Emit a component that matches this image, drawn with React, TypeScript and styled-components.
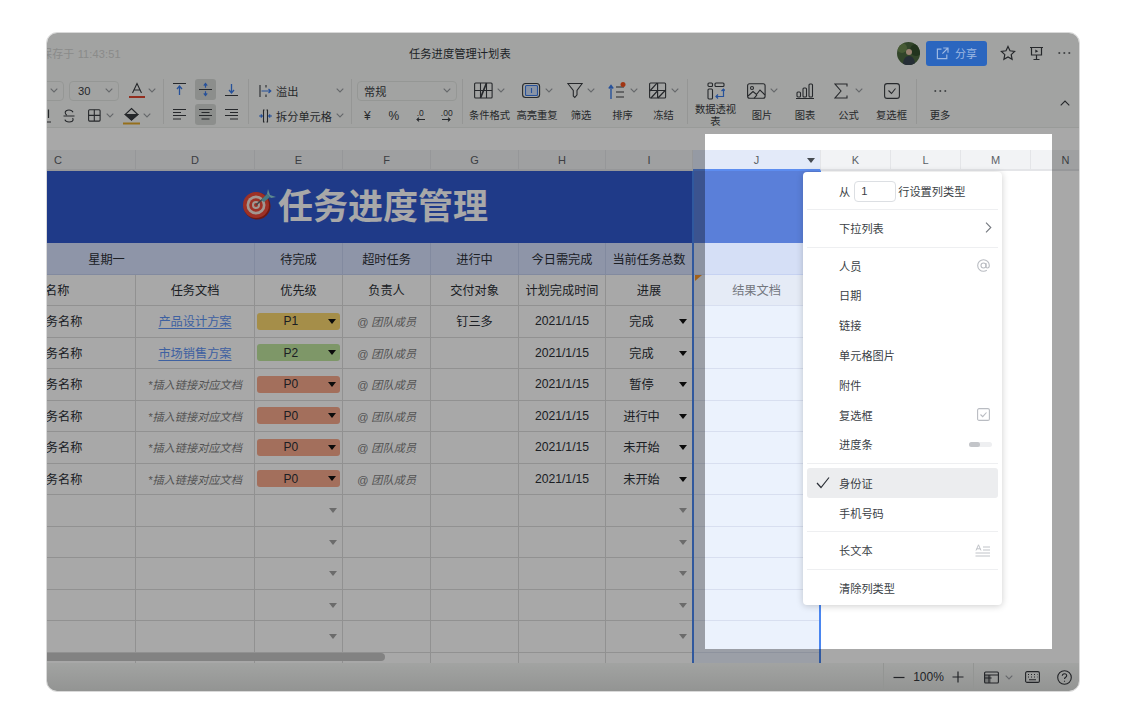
import { ReactNode } from 'react';
import styled, { createGlobalStyle } from 'styled-components';

const GlobalStyle = createGlobalStyle`
    html, body {
        margin: 0;
        padding: 0;
        background: #fff;
    }
    body {
        font-family: 'Liberation Sans', 'Noto Sans CJK SC', sans-serif;
        color: #2b2f36;
    }
`;

const Page = styled.div`
    width: 1125px;
    height: 726px;
    padding: 32px 0 0 46px;
    box-sizing: border-box;
`;

const Window = styled.div`
    position: relative;
    width: 1034px;
    height: 660px;
    box-sizing: border-box;
    display: flex;
    flex-direction: column;
    overflow: hidden;
    border: 1px solid #d9d9d9;
    border-radius: 11px;
    background: #fff;
`;

/* ---------- title bar ---------- */
const TitleBar = styled.div`
    height: 42px;
    flex: none;
    box-sizing: border-box;
    padding: 0 1px 2px 0;
    display: flex;
    align-items: center;
    background: #f6f8f6;
`;

const Saved = styled.div`
    width: 362px;
    flex: none;
    margin-left: -6px;
    margin-right: 6px;
    font-size: 11px;
    color: #d2d3d2;
    letter-spacing: 0.15px;
    white-space: nowrap;
`;

const DocName = styled.div`
    font-size: 11.3px;
    color: #30343a;
    white-space: nowrap;
`;

const TitleActions = styled.div`
    margin-left: auto;
    display: flex;
    align-items: center;
`;

const Avatar = styled.svg`
    width: 23px;
    height: 23px;
    border-radius: 50%;
    margin-right: 6px;
`;

const ShareButton = styled.div`
    position: relative;
    z-index: 3;
    width: 61px;
    height: 25px;
    margin-right: 7px;
    display: flex;
    align-items: center;
    justify-content: center;
    gap: 6px;
    border-radius: 3px;
    background: #2b66bf;
    color: #9db8e2;
    font-size: 11px;
`;

const HeadIcon = styled.div`
    width: 28px;
    height: 24px;
    display: flex;
    align-items: center;
    justify-content: center;
    color: #3a3d42;
`;

/* ---------- toolbar ---------- */
const Toolbar = styled.div`
    height: 53px;
    flex: none;
    box-sizing: border-box;
    display: flex;
    padding-top: 3px;
    border-bottom: 1px solid #e9ebe9;
    background: #f6f8f6;
    color: #3a3d42;
`;

const ToolGroup = styled.div<{ $w: number; $pl?: number }>`
    width: ${(p) => p.$w}px;
    padding-left: ${(p) => p.$pl || 0}px;
    box-sizing: border-box;
    flex: none;
    display: grid;
    grid-template-rows: 25px 25px;
    overflow: hidden;
`;

const ToolRow = styled.div<{ $between?: boolean }>`
    display: flex;
    align-items: center;
    justify-content: ${(p) => (p.$between ? 'space-between' : 'flex-start')};
    min-width: 0;
    font-size: 11.2px;
    white-space: nowrap;
`;

const Sep = styled.div<{ $ml?: number; $mr?: number }>`
    flex: none;
    width: 1px;
    height: 45px;
    margin: 1px ${(p) => p.$mr || 0}px 0 ${(p) => p.$ml || 0}px;
    background: #e2e4e2;
`;

const SelectBox = styled.div<{ $w: number; $ml?: number; $pl?: number }>`
    flex: none;
    width: ${(p) => p.$w}px;
    height: 20px;
    margin-left: ${(p) => p.$ml || 0}px;
    padding: 0 5px 0 ${(p) => p.$pl || 8}px;
    box-sizing: border-box;
    display: flex;
    align-items: center;
    justify-content: space-between;
    border: 1px solid #e3e5e3;
    border-radius: 4px;
    font-size: 11.2px;
`;

const Ic = styled.svg<{ $ml?: number; $mr?: number }>`
    flex: none;
    display: block;
    margin-left: ${(p) => p.$ml || 0}px;
    margin-right: ${(p) => p.$mr || 0}px;
    fill: none;
    stroke: currentColor;
    stroke-width: 1.1;
`;

const AlignGrid = styled.div`
    display: grid;
    grid-template-columns: repeat(3, 21px);
    grid-template-rows: 21px 21px;
    gap: 4px 5px;
    margin-top: 1px;
    grid-row: 1 / 3;
`;

const AlignCell = styled.div<{ $on?: boolean }>`
    display: flex;
    align-items: center;
    justify-content: center;
    border-radius: 3px;
    background: ${(p) => (p.$on ? '#d5d8d5' : 'transparent')};
`;

const MiniGrid = styled.div`
    display: grid;
    grid-template-columns: repeat(4, 26.5px);
    margin-left: -3px;
    font-size: 11.5px;
`;

const MiniCell = styled.div<{ $big?: boolean }>`
    display: flex;
    flex-direction: column;
    align-items: center;
    justify-content: center;
    line-height: 8px;
    font-size: ${(p) => (p.$big ? 12 : 8.5)}px;
`;

const InlineLabel = styled.span`
    display: flex;
    align-items: center;
`;

const BigButton = styled.div<{ $w: number }>`
    flex: none;
    width: ${(p) => p.$w}px;
    display: grid;
    grid-template-rows: 25px 25px;
    justify-items: center;
    align-items: center;
`;

const BigIcon = styled.div`
    display: flex;
    align-items: center;
    gap: 4px;
`;

const BigLabel = styled.div`
    font-size: 10.3px;
    line-height: 11.5px;
    text-align: center;
    white-space: nowrap;
`;

const Collapse = styled.div`
    margin-left: auto;
    margin-right: 9px;
    display: flex;
    align-items: center;
    height: 50px;
`;

const FormulaBar = styled.div`
    height: 22px;
    flex: none;
    background: #fff;
`;

/* ---------- sheet ---------- */
const Sheet = styled.div`
    position: relative;
    flex: 1;
    min-height: 0;
    overflow: hidden;
`;

const Row = styled.div<{ $h: number }>`
    height: ${(p) => p.$h}px;
    display: grid;
    grid-template-columns: 155px 119px 88px 88px 88px 87px 87px 128px 70px 70px 70px 70px;
    margin-left: -66px;
`;

const ColHead = styled.div<{ $sel?: boolean }>`
    position: relative;
    display: flex;
    align-items: center;
    justify-content: center;
    box-sizing: border-box;
    font-size: 11px;
    color: #5b5f66;
    background: ${(p) => (p.$sel ? '#e3eaf9' : '#f2f3f5')};
    border-right: 1px solid #e4e5e8;
    border-bottom: 2px solid ${(p) => (p.$sel ? '#5d8df0' : '#e4e5e8')};
`;

const HeadArrow = styled.span`
    position: absolute;
    right: 5px;
    top: 8px;
    width: 0;
    height: 0;
    border: 4.5px solid transparent;
    border-top: 5px solid #454a52;
    border-bottom: 0;
`;

const Banner = styled.div`
    grid-column: 1 / span 7;
    display: flex;
    align-items: center;
    justify-content: center;
    gap: 1px;
    padding-left: 56px;
    padding-bottom: 7px;
    background: #2f58cf;
    color: #fff;
    font-size: 35px;
    font-weight: 700;
`;

const BannerSelected = styled.div`
    background: #5a7fd9;
`;

const BandCell = styled.div<{ $span?: number; $sel?: boolean; $pr?: number }>`
    grid-column: span ${(p) => p.$span || 1};
    box-sizing: border-box;
    display: flex;
    align-items: center;
    justify-content: center;
    padding-right: ${(p) => p.$pr || 0}px;
    font-size: 12.2px;
    background: ${(p) => (p.$sel ? '#d5dff6' : '#d8e2ff')};
    border-right: 1px solid #c6d2f2;
    border-bottom: 1px solid #c6d2f2;
    color: #2b2f36;
`;

const Cell = styled.div<{ $sel?: boolean; $pr?: number; $result?: boolean }>`
    position: relative;
    box-sizing: border-box;
    min-width: 0;
    display: flex;
    align-items: center;
    justify-content: center;
    padding-right: ${(p) => p.$pr || 0}px;
    font-size: 12.2px;
    white-space: nowrap;
    background: ${(p) => (p.$result ? '#e5ebf6' : p.$sel ? '#ebf2fd' : '#fff')};
    border-right: 1px solid ${(p) => (p.$sel ? '#d8dff0' : '#dcdcdc')};
    border-bottom: 1px solid ${(p) => (p.$sel ? '#d8dff0' : '#dcdcdc')};
    color: ${(p) => (p.$result ? '#74787f' : '#2b2f36')};
`;

const DocLink = styled.span`
    color: #5e93f5;
    text-decoration: underline;
    text-underline-offset: 2px;
`;

const Hint = styled.span`
    color: #7f7f7f;
    font-style: italic;
    font-size: 11.2px;
`;

const Chip = styled.div<{ $c: string }>`
    width: 83px;
    height: 17px;
    box-sizing: border-box;
    margin-right: 1px;
    padding: 0 4px 0 27px;
    display: flex;
    align-items: center;
    justify-content: space-between;
    border-radius: 3px;
    background: ${(p) => p.$c};
    font-size: 12px;
    color: #2b2f36;
`;

const Arrow = styled.span<{ $muted?: boolean }>`
    width: 0;
    height: 0;
    border: 4px solid transparent;
    border-top: 5px solid ${(p) => (p.$muted ? '#a3a3a3' : '#111')};
    border-bottom: 0;
`;

const CellArrow = styled(Arrow)`
    position: absolute;
    right: 5px;
    top: 13px;
`;

const Corner = styled.span`
    position: absolute;
    left: 2px;
    top: 0;
    width: 0;
    height: 0;
    border-top: 6px solid #f5932a;
    border-right: 7px solid transparent;
`;

const Selection = styled.div`
    position: absolute;
    left: 645px;
    top: 21px;
    bottom: 0;
    width: 129px;
    box-sizing: border-box;
    border-left: 2px solid #4a86f0;
    border-right: 2px solid #4a86f0;
    pointer-events: none;
`;

const ScrollThumb = styled.div`
    position: absolute;
    left: 0;
    bottom: 2px;
    width: 338px;
    height: 8px;
    border-radius: 0 4px 4px 0;
    background: #c6c6c6;
`;

/* ---------- status bar ---------- */
const StatusBar = styled.div`
    height: 28px;
    flex: none;
    display: flex;
    justify-content: flex-end;
    align-items: stretch;
    background: linear-gradient(#f6f8f6, #dfe1df);
    color: #34373c;
`;

const ZoomGroup = styled.div`
    width: 90px;
    box-sizing: border-box;
    display: flex;
    align-items: center;
    justify-content: center;
    gap: 8px;
    border-left: 1px solid #e0e2e0;
    font-size: 12px;
`;

const ViewGroup = styled.div`
    width: 106px;
    box-sizing: border-box;
    padding-left: 10px;
    display: flex;
    align-items: center;
    border-left: 1px solid #e0e2e0;
`;

/* ---------- spotlight and menu ---------- */
const Spotlight = styled.div`
    position: absolute;
    left: 658px;
    top: 101px;
    width: 347px;
    height: 515px;
    box-shadow: 0 0 0 1600px rgba(0, 0, 0, 0.34);
    pointer-events: none;
    z-index: 2;
`;

const Menu = styled.div`
    position: absolute;
    left: 756px;
    top: 139px;
    width: 199px;
    box-sizing: border-box;
    padding: 4px 4px 2px;
    background: #fff;
    border-radius: 4px;
    box-shadow: 0 1px 7px rgba(0, 0, 0, 0.2);
    z-index: 4;
    font-size: 11.2px;
    color: #3b3f46;
`;

const MenuHead = styled.div`
    height: 30px;
    display: flex;
    align-items: center;
    padding-left: 32px;
`;

const RowInput = styled.div`
    width: 42px;
    height: 21px;
    box-sizing: border-box;
    margin: 0 2px 0 4px;
    padding-left: 6px;
    display: flex;
    align-items: center;
    border: 1px solid #dcdfe3;
    border-radius: 4px;
`;

const MenuItem = styled.div<{ $active?: boolean }>`
    position: relative;
    height: 29.8px;
    display: flex;
    align-items: center;
    justify-content: space-between;
    padding: 0 6px 0 32px;
    border-radius: 3px;
    background: ${(p) => (p.$active ? '#ecedef' : 'transparent')};
`;

const MenuCheck = styled.span`
    position: absolute;
    left: 9px;
    top: 8px;
    color: #2b2f36;
`;

const MenuLine = styled.div<{ $mt: number; $mb: number }>`
    height: 1px;
    margin: ${(p) => p.$mt}px 0 ${(p) => p.$mb}px;
    background: #eeeff1;
`;

const Muted = styled.span`
    display: flex;
    margin-right: 2px;
    color: #b9bcc2;
`;

const ProgressTrack = styled.div`
    width: 23px;
    height: 5px;
    border-radius: 3px;
    background: #eeeff1;
`;

const ProgressFill = styled.div`
    width: 11px;
    height: 5px;
    border-radius: 3px;
    background: #c3c5c9;
`;

const ChevronIcon = styled(Ic)`
    color: #9a9da2;
`;

const MenuChevron = styled(Ic)`
    color: #74787f;
`;

/* ---------- icons ---------- */
const BLUE = '#3b7bea';

const Chevron = ({ ml = 0, mr = 0 }: { ml?: number; mr?: number }) => (
    <ChevronIcon width="8" height="5" viewBox="0 0 8 5" $ml={ml} $mr={mr}>
        <path d="M.7.7 4 4 7.3.7" />
    </ChevronIcon>
);

const Glyph = ({ w = 16, h = 16, ml, mr, children }: { w?: number; h?: number; ml?: number; mr?: number; children: ReactNode }) => (
    <Ic width={w} height={h} viewBox={`0 0 ${w} ${h}`} $ml={ml} $mr={mr}>
        {children}
    </Ic>
);

const alignIcon = (mode: 'top' | 'mid' | 'bottom') => (
    <Glyph w={15} h={15}>
        {mode === 'top' && (
            <>
                <path d="M1 1.5h13" />
                <path d="M7.5 13V4.5M5 7l2.5-3L10 7" stroke={BLUE} strokeWidth="1.3" />
            </>
        )}
        {mode === 'mid' && (
            <>
                <path d="M1 7.5h13" />
                <path d="M7.5 5.8V1M5.8 3.6 7.5 1.4l1.7 2.2M7.5 9.2V14M5.8 11.4l1.7 2.2 1.7-2.2" stroke={BLUE} strokeWidth="1.2" />
            </>
        )}
        {mode === 'bottom' && (
            <>
                <path d="M1 13.5h13" />
                <path d="M7.5 2v8.5M5 8l2.5 3L10 8" stroke={BLUE} strokeWidth="1.3" />
            </>
        )}
    </Glyph>
);

const linesIcon = (mode: 'left' | 'center' | 'right') => {
    const x = (len: number) => (mode === 'left' ? 1 : mode === 'right' ? 14 - len : 7.5 - len / 2);
    return (
        <Glyph w={15} h={13}>
            <path d={`M${x(13)} 1.5h13M${x(8)} 4.5h8M${x(13)} 7.5h13M${x(8)} 11h8`} />
        </Glyph>
    );
};

const TableSlash = () => (
    <Glyph w={19} h={17}>
        <rect x=".6" y="1" width="17.5" height="15" rx="1" />
        <path d="M6.5 1v15M12.5 1v15M.6 8.5h17.5" />
        <path d="M6.5 16 12.5 1" strokeWidth="1.7" />
    </Glyph>
);

const FreezeIcon = () => (
    <Glyph w={18} h={17}>
        <rect x=".6" y="1" width="16" height="15" rx="1" />
        <path d="M8.6 1v15M.6 8.5h16M.8 9 8 1.2M9 16l7.6-8M2 16l6.4-7" strokeWidth="1.2" />
    </Glyph>
);

function App() {
    const people = <Hint>@ 团队成员</Hint>;
    const fill = <Hint>*插入链接对应文档</Hint>;
    const rows = [
        { doc: <DocLink>产品设计方案</DocLink>, pri: 'P1', target: '钉三多', state: '完成' },
        { doc: <DocLink>市场销售方案</DocLink>, pri: 'P2', target: '', state: '完成' },
        { doc: fill, pri: 'P0', target: '', state: '暂停' },
        { doc: fill, pri: 'P0', target: '', state: '进行中' },
        { doc: fill, pri: 'P0', target: '', state: '未开始' },
        { doc: fill, pri: 'P0', target: '', state: '未开始' },
    ];
    const chipColor: Record<string, string> = { P1: '#fbd870', P2: '#bfe59f', P0: '#f8a98c' };

    return (
        <>
            <GlobalStyle />
            <Page>
                <Window>
                    <TitleBar>
                        <Saved>保存于 11:43:51</Saved>
                        <DocName>任务进度管理计划表</DocName>
                        <TitleActions>
                            <Avatar viewBox="0 0 23 23">
                                <rect width="23" height="23" fill="#4c6a40" />
                                <circle cx="5" cy="6" r="5" fill="#6c8a50" />
                                <circle cx="19" cy="8" r="6" fill="#34502e" />
                                <circle cx="12" cy="10" r="3" fill="#e9c5ac" />
                                <path d="M6 23c0-6 2.500-9 6-9s6 3 6 9z" fill="#3a4652" />
                            </Avatar>
                            <ShareButton>
                                <Ic width="13" height="13" viewBox="0 0 13 13">
                                    <path d="M5.5 2.2H1.4v9.4h9.4V7.5M7.2 1h4.8v4.8M12 1 6.4 6.6" strokeWidth="1.2" />
                                </Ic>
                                分享
                            </ShareButton>
                            <HeadIcon>
                                <Glyph w={16} h={16}>
                                    <path d="m8 1.5 2 4.3 4.6.6-3.4 3.2.9 4.7L8 12l-4.1 2.3.9-4.7L1.4 6.4 6 5.8z" strokeWidth="1.2" />
                                </Glyph>
                            </HeadIcon>
                            <HeadIcon>
                                <Glyph w={15} h={15}>
                                    <path d="M1 1.5h13M2.5 1.5v7.5h10V1.5M7.5 9v4M4.5 13.5h6" strokeWidth="1.2" />
                                    <path d="m6.3 3.6 3 1.6-3 1.6z" fill="currentColor" stroke="none" />
                                </Glyph>
                            </HeadIcon>
                            <HeadIcon>
                                <Glyph w={14} h={4}>
                                    <path d="M2 2h.6M7 2h.6M12 2h.6" strokeWidth="1.5" strokeLinecap="round" />
                                </Glyph>
                            </HeadIcon>
                        </TitleActions>
                    </TitleBar>

                    <Toolbar>
                        <ToolGroup $w={116}>
                            <ToolRow>
                                <SelectBox $w={34} $ml={-17}>
                                    <span />
                                    <Chevron />
                                </SelectBox>
                                <SelectBox $w={50} $ml={5}>
                                    <span>30</span>
                                    <Chevron />
                                </SelectBox>
                                <Glyph w={16} h={17} ml={10}>
                                    <path d="M3.5 11 8 1.5l4.5 9.5M5 8h6" />
                                    <path d="M0 15h16" stroke="#e0462f" strokeWidth="2.2" />
                                </Glyph>
                                <Chevron ml={3} />
                            </ToolRow>
                            <ToolRow>
                                <Glyph w={6} h={16} ml={-2}>
                                    <path d="M3.5 1.5v8.5M0 14h6" strokeWidth="1.2" />
                                </Glyph>
                                <Glyph w={12} h={14} ml={12}>
                                    <path d="M10 3.2C9.4 1.7 8 1 6 1 3.7 1 2.2 2 2.2 3.6c0 1 .4 1.9 1.6 2.4M.5 7h11M9.6 9c.4.6.5 1 .5 1.6 0 1.5-1.6 2.4-4 2.4-2.2 0-3.7-.8-4.2-2.4" />
                                </Glyph>
                                <Glyph w={13} h={13} ml={13}>
                                    <rect x=".6" y=".8" width="11.5" height="11.3" rx="1" />
                                    <path d="M6.3.8v11.3M.6 6.4h11.5" />
                                </Glyph>
                                <Chevron ml={5} />
                                <Glyph w={17} h={18} ml={9}>
                                    <path d="m8.5 1.5 6.3 6-6.3 5.5L2.2 7.5z" />
                                    <path d="M2.4 7.5h12.4l-6.3 5.5z" fill="currentColor" />
                                    <path d="M0 16.5h17" stroke="#e3a92a" strokeWidth="2.2" />
                                </Glyph>
                                <Chevron ml={3} />
                            </ToolRow>
                        </ToolGroup>
                        <Sep />
                        <ToolGroup $w={84} $pl={5}>
                            <AlignGrid>
                                <AlignCell>{alignIcon('top')}</AlignCell>
                                <AlignCell $on>{alignIcon('mid')}</AlignCell>
                                <AlignCell>{alignIcon('bottom')}</AlignCell>
                                <AlignCell>{linesIcon('left')}</AlignCell>
                                <AlignCell $on>{linesIcon('center')}</AlignCell>
                                <AlignCell>{linesIcon('right')}</AlignCell>
                            </AlignGrid>
                        </ToolGroup>
                        <Sep />
                        <ToolGroup $w={102} $pl={10}>
                            <ToolRow $between>
                                <InlineLabel>
                                    <Glyph w={13} h={14} mr={4}>
                                        <path d="M1 1v12M7 1v2.5M7 10.5V13" />
                                        <path d="M2.5 7h9M9.5 5l2.3 2-2.3 2" stroke={BLUE} strokeWidth="1.2" />
                                    </Glyph>
                                    溢出
                                </InlineLabel>
                                <Chevron mr={7} />
                            </ToolRow>
                            <ToolRow $between>
                                <InlineLabel>
                                    <Glyph w={13} h={14} mr={4}>
                                        <path d="M5.5 1h-1v12h1M7.5 1h1v12h-1" />
                                        <path d="M0 7h3M1.8 5.5 3.3 7 1.8 8.5M13 7h-3M11.2 5.5 9.7 7l1.5 1.5" stroke={BLUE} strokeWidth="1.2" />
                                    </Glyph>
                                    拆分单元格
                                </InlineLabel>
                                <Chevron mr={7} />
                            </ToolRow>
                        </ToolGroup>
                        <Sep />
                        <ToolGroup $w={110} $pl={5}>
                            <ToolRow>
                                <SelectBox $w={100} $pl={6}>
                                    <span>常规</span>
                                    <Chevron />
                                </SelectBox>
                            </ToolRow>
                            <ToolRow>
                                <MiniGrid>
                                    <MiniCell $big>¥</MiniCell>
                                    <MiniCell $big>%</MiniCell>
                                    <MiniCell>
                                        .0
                                        <Glyph w={11} h={5}>
                                            <path d="M10 2.5H2M4 .7 2 2.5l2 1.8" />
                                        </Glyph>
                                    </MiniCell>
                                    <MiniCell>
                                        .00
                                        <Glyph w={11} h={5}>
                                            <path d="M1 2.5h8M7 .7l2 1.8-2 1.8" />
                                        </Glyph>
                                    </MiniCell>
                                </MiniGrid>
                            </ToolRow>
                        </ToolGroup>
                        <Sep $mr={3} />

                        <BigButton $w={47}>
                            <BigIcon>
                                <TableSlash />
                                <Chevron />
                            </BigIcon>
                            <BigLabel>条件格式</BigLabel>
                        </BigButton>
                        <BigButton $w={48}>
                            <BigIcon>
                                <Glyph w={19} h={17}>
                                    <rect x=".6" y="1.5" width="17" height="14" rx="3" />
                                    <rect x="3.5" y="3.5" width="12" height="10" rx="1" stroke={BLUE} fill="#cfe0fb" />
                                    <path d="M9.5 6v5" stroke={BLUE} />
                                </Glyph>
                                <Chevron />
                            </BigIcon>
                            <BigLabel>高亮重复</BigLabel>
                        </BigButton>
                        <BigButton $w={40}>
                            <BigIcon>
                                <Glyph w={16} h={17}>
                                    <path d="M.8 1.5h14.4L10 8.5v4.3l-2.2 2.7L6.3 14V8.5z" />
                                </Glyph>
                                <Chevron />
                            </BigIcon>
                            <BigLabel>筛选</BigLabel>
                        </BigButton>
                        <BigButton $w={43}>
                            <BigIcon>
                                <Glyph w={18} h={18}>
                                    <path d="M3 17V4M.8 6.5 3 3.5l2.2 3" stroke={BLUE} strokeWidth="1.4" />
                                    <path d="M8 5h8M8 10h8M8 15h8" />
                                    <circle cx="15" cy="2.5" r="2.5" fill="#f4511e" stroke="none" />
                                </Glyph>
                                <Chevron />
                            </BigIcon>
                            <BigLabel>排序</BigLabel>
                        </BigButton>
                        <BigButton $w={39}>
                            <BigIcon>
                                <FreezeIcon />
                                <Chevron />
                            </BigIcon>
                            <BigLabel>冻结</BigLabel>
                        </BigButton>
                        <Sep $ml={4} $mr={3} />

                        <BigButton $w={49}>
                            <BigIcon>
                                <Glyph w={18} h={18}>
                                    <rect x="1" y="1" width="4.5" height="3.5" rx="1" />
                                    <rect x="8" y="1" width="9" height="3.5" rx="1" />
                                    <rect x="1" y="7" width="4.5" height="10" rx="1" />
                                    <path d="M16.5 7v7.5H9M11 12.5 9 14.5l2 2M14.5 9l2-2 2 2" stroke={BLUE} strokeWidth="1.2" />
                                </Glyph>
                            </BigIcon>
                            <BigLabel>
                                数据透视
                                <br />表
                            </BigLabel>
                        </BigButton>
                        <BigButton $w={44}>
                            <BigIcon>
                                <Glyph w={19} h={16}>
                                    <rect x=".6" y=".8" width="17.5" height="14.5" rx="2" />
                                    <circle cx="5" cy="5" r="1.5" />
                                    <path d="m1 13 5-4.5 3.5 3L13 7l5 5M7 15.3l3-3.5" />
                                </Glyph>
                                <Chevron />
                            </BigIcon>
                            <BigLabel>图片</BigLabel>
                        </BigButton>
                        <BigButton $w={42}>
                            <Glyph w={18} h={16}>
                                <rect x="1" y="9" width="3.5" height="5" rx="1" />
                                <rect x="7" y="5" width="3.5" height="9" rx="1" />
                                <rect x="13" y="1" width="3.5" height="13" rx="1" />
                                <path d="M0 15.5h18" />
                            </Glyph>
                            <BigLabel>图表</BigLabel>
                        </BigButton>
                        <BigButton $w={45}>
                            <BigIcon>
                                <Glyph w={14} h={16}>
                                    <path d="M13 3.5V1H1l6 7-6 7h12v-2.500" />
                                </Glyph>
                                <Chevron ml={3} />
                            </BigIcon>
                            <BigLabel>公式</BigLabel>
                        </BigButton>
                        <BigButton $w={41}>
                            <Glyph w={16} h={16}>
                                <rect x=".6" y=".6" width="14.8" height="14.8" rx="2.5" />
                                <path d="m4.5 7.5 3 3 4-5" />
                            </Glyph>
                            <BigLabel>复选框</BigLabel>
                        </BigButton>
                        <Sep $ml={4} $mr={3} />
                        <BigButton $w={40}>
                            <Glyph w={14} h={4}>
                                <path d="M2 2h.6M7 2h.6M12 2h.6" strokeWidth="1.4" strokeLinecap="round" />
                            </Glyph>
                            <BigLabel>更多</BigLabel>
                        </BigButton>
                        <Collapse>
                            <Glyph w={10} h={6}>
                                <path d="M.7 5.3 5 1l4.3 4.3" />
                            </Glyph>
                        </Collapse>
                    </Toolbar>

                    <FormulaBar />

                    <Sheet>
                        <Row $h={21}>
                            {'C D E F G H I J K L M N'.split(' ').map((c) => (
                                <ColHead key={c} $sel={c === 'J'}>
                                    {c}
                                    {c === 'J' && <HeadArrow />}
                                </ColHead>
                            ))}
                        </Row>
                        <Row $h={72}>
                            <Banner>
                                <svg width="35" height="32" viewBox="0 0 35 32">
                                    <circle cx="15" cy="18" r="13.5" fill="#a8261c" />
                                    <circle cx="14" cy="17" r="13" fill="#ee4b3a" />
                                    <circle cx="14" cy="17" r="9.5" fill="#f6e6dc" />
                                    <circle cx="14" cy="17" r="6.8" fill="#ee4b3a" />
                                    <circle cx="14" cy="17" r="4" fill="#f6e6dc" />
                                    <circle cx="14" cy="17" r="2" fill="#ee4b3a" />
                                    <path d="M14 17 23 9" stroke="#5a6b70" strokeWidth="1.5" />
                                    <path d="m19 12 6-6 3 3-6 5z" fill="#6bb8c4" />
                                    <path d="m26 1 2 6 6 2-5 1-4-4z" fill="#8fd0d8" />
                                </svg>
                                任务进度管理
                            </Banner>
                            <BannerSelected />
                        </Row>
                        <Row $h={32}>
                            <BandCell $span={2} $pr={22}>
                                星期一
                            </BandCell>
                            <BandCell>待完成</BandCell>
                            <BandCell>超时任务</BandCell>
                            <BandCell>进行中</BandCell>
                            <BandCell>今日需完成</BandCell>
                            <BandCell>当前任务总数</BandCell>
                            <BandCell $sel />
                        </Row>
                        <Row $h={31}>
                            <Cell $pr={26}>任务名称</Cell>
                            <Cell>任务文档</Cell>
                            <Cell>优先级</Cell>
                            <Cell>负责人</Cell>
                            <Cell>交付对象</Cell>
                            <Cell>计划完成时间</Cell>
                            <Cell>进展</Cell>
                            <Cell $sel $result>
                                <Corner />
                                结果文档
                            </Cell>
                        </Row>
                        {rows.map((r, i) => (
                            <Row $h={31.5} key={i}>
                                <Cell>任务名称</Cell>
                                <Cell>{r.doc}</Cell>
                                <Cell>
                                    <Chip $c={chipColor[r.pri]}>
                                        {r.pri}
                                        <Arrow />
                                    </Chip>
                                </Cell>
                                <Cell>{people}</Cell>
                                <Cell>{r.target}</Cell>
                                <Cell>2021/1/15</Cell>
                                <Cell $pr={15}>
                                    {r.state}
                                    <CellArrow />
                                </Cell>
                                <Cell $sel />
                            </Row>
                        ))}
                        {[0, 1, 2, 3, 4, 5].map((i) => (
                            <Row $h={31.5} key={i}>
                                <Cell />
                                <Cell />
                                <Cell>
                                    <CellArrow $muted />
                                </Cell>
                                <Cell />
                                <Cell />
                                <Cell />
                                <Cell>
                                    <CellArrow $muted />
                                </Cell>
                                <Cell $sel />
                            </Row>
                        ))}
                        <Selection />
                        <ScrollThumb />
                    </Sheet>

                    <StatusBar>
                        <ZoomGroup>
                            <Glyph w={12} h={3}>
                                <path d="M.5 1.5h11" strokeWidth="1.2" />
                            </Glyph>
                            100%
                            <Glyph w={12} h={12}>
                                <path d="M.5 6h11M6 .5v11" strokeWidth="1.2" />
                            </Glyph>
                        </ZoomGroup>
                        <ViewGroup>
                            <Glyph w={15} h={13}>
                                <rect x=".6" y="1" width="13.8" height="11" rx="1" />
                                <path d="M.6 4h13.8M.6 7h7M5 4v8" />
                                <rect x="1" y="4" width="6" height="8" fill="currentColor" stroke="none" opacity=".3" />
                            </Glyph>
                            <Chevron ml={6} />
                            <Glyph w={15} h={12} ml={12}>
                                <rect x=".6" y=".6" width="13.8" height="10.8" rx="1.5" />
                                <path d="M3 3.5h1M6 3.5h1M9 3.5h1M12 3.5h.5M3 6h1M6 6h1M9 6h1M12 6h.5M4 8.8h7" />
                            </Glyph>
                            <Glyph w={15} h={15} ml={17}>
                                <circle cx="7.5" cy="7.5" r="6.8" />
                                <path d="M5.3 5.8c0-1.3 1-2.1 2.2-2.1s2.2.8 2.2 2c0 1.5-2.2 1.7-2.2 3.3M7.5 10.800v1" />
                            </Glyph>
                        </ViewGroup>
                    </StatusBar>

                    <Spotlight />

                    <Menu>
                        <MenuHead>
                            从
                            <RowInput>1</RowInput>
                            行设置列类型
                        </MenuHead>
                        <MenuLine $mt={3} $mb={3} />
                        <MenuItem>
                            下拉列表
                            <MenuChevron width="7" height="11" viewBox="0 0 7 11">
                                <path d="M1 .7 5.8 5.5 1 10.3" />
                            </MenuChevron>
                        </MenuItem>
                        <MenuLine $mt={4} $mb={3} />
                        <MenuItem>
                            人员
                            <Muted>
                                <Glyph w={13} h={13}>
                                    <circle cx="6.5" cy="6.5" r="2.5" />
                                    <path d="M9 4v3.5c0 1 .6 1.5 1.4 1.5 1 0 1.9-1 1.9-2.5 0-3.2-2.6-5.8-5.8-5.8S.7 3.3.7 6.5s2.6 5.800 5.800 5.800c1.300 0 2.300-.3 3.300-1" />
                                </Glyph>
                            </Muted>
                        </MenuItem>
                        <MenuItem>日期</MenuItem>
                        <MenuItem>链接</MenuItem>
                        <MenuItem>单元格图片</MenuItem>
                        <MenuItem>附件</MenuItem>
                        <MenuItem>
                            复选框
                            <Muted>
                                <Glyph w={13} h={13}>
                                    <rect x=".6" y=".6" width="11.8" height="11.8" rx="1.5" />
                                    <path d="m3.5 6.5 2.2 2.2 3.8-4.200" />
                                </Glyph>
                            </Muted>
                        </MenuItem>
                        <MenuItem>
                            进度条
                            <ProgressTrack>
                                <ProgressFill />
                            </ProgressTrack>
                        </MenuItem>
                        <MenuLine $mt={3.5} $mb={4} />
                        <MenuItem $active>
                            <MenuCheck>
                                <Glyph w={14} h={13}>
                                    <path d="m1 7 4 4.5L13 1.5" strokeWidth="1.2" />
                                </Glyph>
                            </MenuCheck>
                            身份证
                        </MenuItem>
                        <MenuItem>手机号码</MenuItem>
                        <MenuLine $mt={3.5} $mb={3.5} />
                        <MenuItem>
                            长文本
                            <Muted>
                                <Glyph w={15} h={13}>
                                    <path d="M1 6.5 3.5.8 6 6.5M1.8 4.8h3.400M8 3h7M8 6h7M.5 9h14.500M.5 12h14.500" strokeWidth=".9" />
                                </Glyph>
                            </Muted>
                        </MenuItem>
                        <MenuLine $mt={3.5} $mb={3.5} />
                        <MenuItem>清除列类型</MenuItem>
                    </Menu>
                </Window>
            </Page>
        </>
    );
}

export default App;
